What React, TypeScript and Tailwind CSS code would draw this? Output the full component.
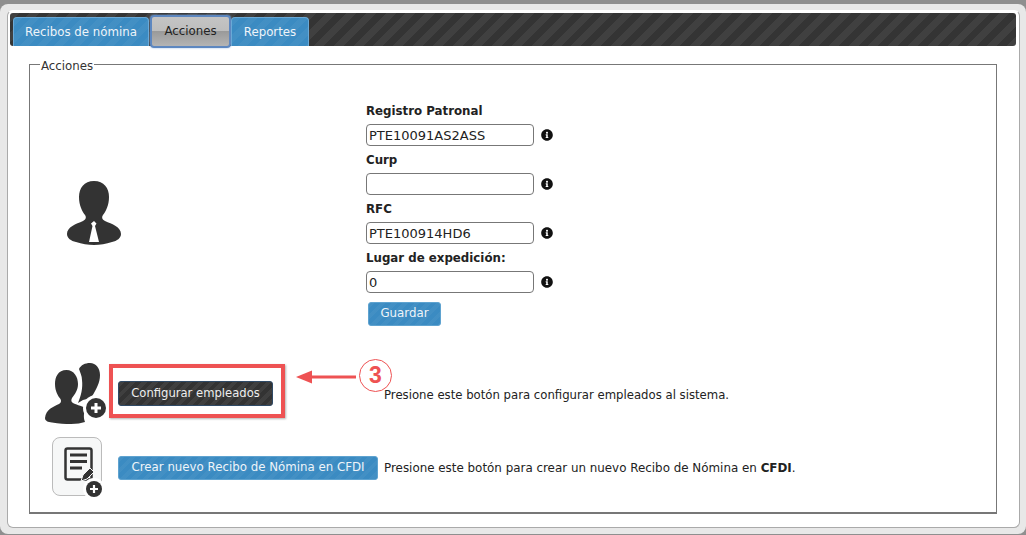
import React from "react";
import { FaInfoCircle } from "react-icons/fa";

const blueBtn =
  "bg-[#3b8bc2] bg-[repeating-linear-gradient(135deg,rgba(255,255,255,0.04)_0,rgba(255,255,255,0.04)_4px,transparent_4px,transparent_8px)] border border-[#5fa3d0] text-[#eef4f9] rounded-[3px]";

function Field({ label, value }: { label: string; value: string }) {
  return (
    <div className="flex flex-col">
      <label className="h-[27px] pt-[5px] leading-[18px] font-bold text-[#222] text-[11.8px]">{label}</label>
      <div className="flex items-center h-[22px]">
        <input
          readOnly
          value={value}
          className="w-[168px] h-[22px] border border-[#777] rounded-[4px] bg-white px-[2px] text-[13px] text-[#222] outline-none font-['DejaVu_Sans',sans-serif]"
        />
        <FaInfoCircle className="ml-[7px] text-[#111]" size={12} />
      </div>
    </div>
  );
}

function PersonTie() {
  return (
    <svg width="56" height="64" viewBox="0 0 56 64">
      <path
        d="M28 0C18 0 13 7 13 16C13 24 16 30 19 34C21 37 19 39 17 40C10 43 1 46 1 53C1 57 5 60 10 61C16 63 22 64 28 64C34 64 40 63 46 61C51 60 55 57 55 53C55 46 46 43 39 40C37 39 35 37 37 34C40 30 43 24 43 16C43 7 38 0 28 0Z"
        fill="#333"
      />
      <path d="M28 40l2.500 2.500-1.500 2.500L33 61H23L26.500 45l-1.500-2.500Z" fill="#fff" />
    </svg>
  );
}

function PeoplePlus() {
  return (
    <svg width="64" height="62" viewBox="0 0 64 62" className="overflow-visible">
      <path
        d="M34 7C36 3 40 1 45 1C51 1 55 6 55 13C55 21 51 27 49 31L46 36L38 38L33 41C36 34 38 26 37 18C37 14 35 10 34 7Z"
        fill="#333"
      />
      <path
        d="M21.500 8C13 8 10 15 10 22C10 29 13 34 15.500 37C16.500 39 16 41 14 42C8 45 1 47 0 56C0 59 3 60 7 60.500C14 61.500 20 62 26 62C32 62 36 61 40 60C38 55 39 49 41 46C36 44 30 42 28 41C26 40 26 38 27 36C30 32 33 28 33 22C33 15 29 8 21.500 8Z"
        fill="#333"
      />
      <circle cx="51" cy="46" r="13" fill="#fff" />
      <circle cx="51" cy="46" r="10" fill="#333" />
      <path d="M51 41v10M46 46h10" stroke="#fff" strokeWidth="3" />
    </svg>
  );
}

function DocPlus() {
  return (
    <div className="relative w-[50px] h-[59px] border border-[#bbb] rounded-[8px] bg-[#f6f7f7]">
      <svg className="absolute left-0 top-0" width="62" height="62" viewBox="0 0 62 62">
        <rect x="12.500" y="10.500" width="26" height="31" rx="2" fill="none" stroke="#333" strokeWidth="2.500" />
        <path d="M17 17h17M17 23.500h17M17 30h12" stroke="#333" strokeWidth="3" />
        <path d="M28 43l2-6 7-7 4 4-7 7Z" fill="#333" stroke="#f6f7f7" strokeWidth="1" />
        <circle cx="41" cy="51" r="11" fill="#fff" />
        <circle cx="41" cy="51" r="8" fill="#333" />
        <path d="M41 47v8M37 51h8" stroke="#fff" strokeWidth="2.200" />
      </svg>
    </div>
  );
}

export default function App() {
  const tab =
    "h-[29px] pt-[1px] flex items-center justify-center whitespace-nowrap text-[11.8px] rounded-t-[4px] border border-b-0 border-[#6aa9d6] text-[#eef4f9] bg-[#3b8bc2] bg-[repeating-linear-gradient(135deg,rgba(255,255,255,0.04)_0,rgba(255,255,255,0.04)_6px,transparent_6px,transparent_12px)]";
  return (
    <div className="w-[1026px] h-[535px] overflow-hidden bg-[#8f8f8f] pt-[4px] font-['DejaVu_Sans',sans-serif] text-[11.8px] text-[#222]">
      <div className="h-[530px] bg-[#e8e8e8] rounded-[8px] pl-[7px] pr-[6px] pt-[6px]">
        <div className="h-[518px] w-[1013px] relative bg-white rounded-[6px] border border-[#aaa] border-t-white pl-[2px] pt-[2px]">
          <div className="h-[33px] w-[1006px] bg-[#333] bg-[repeating-linear-gradient(135deg,#404040_0,#404040_7px,#343434_7px,#343434_14px)] rounded-[3px] flex items-end pl-[3px]">
            <div className={tab + " w-[136px]"}>Recibos de nómina</div>
            <div className="h-[33px] w-[81px] ml-[1px] -mb-[2px] pt-[1px] flex items-center justify-center text-[11.8px] text-[#222] rounded-[4px] border-2 border-[#5d87c0] shadow-[0_0_2px_#8fb4e0] bg-[linear-gradient(#c4c4c4_0,#bdbdbd_48%,#9a9a9a_50%,#b4b4b4_100%)]">
              Acciones
            </div>
            <div className={tab + " w-[78px]"}>Reportes</div>
          </div>
          <div className="pl-[19px] pt-[8px]">
            <fieldset className="w-[968px] h-[460px] border border-[#777] border-b-2 pl-[10px] pr-[10px]">
              <legend className="px-[1px] pt-[4px] leading-[17px] text-[#333]">Acciones</legend>
              <div className="flex">
                <div className="w-[90px] pt-[106px] pl-[26px] shrink-0 box-content">
                  <PersonTie />
                </div>
                <div className="ml-[210px] pt-[22px] flex flex-col">
                  <Field label="Registro Patronal" value="PTE10091AS2ASS" />
                  <Field label="Curp" value="" />
                  <Field label="RFC" value="PTE100914HD6" />
                  <Field label="Lugar de expedición:" value="0" />
                  <button className={blueBtn + " mt-[9px] ml-[2px] w-[73px] h-[24px]"}>Guardar</button>
                </div>
              </div>
              <div className="flex items-start mt-[35px] ml-[4px]">
                <div className="w-[74px] shrink-0 pl-[1px] pt-[1px]"><PeoplePlus /></div>
                <button className="mt-[20px] w-[155px] h-[25px] text-[11.6px] rounded-[3px] border border-[#2f4a66] text-[#eee] bg-[#333] bg-[repeating-linear-gradient(135deg,#3f3f3f_0,#3f3f3f_4px,#333_4px,#333_8px)]">
                  Configurar empleados
                </button>
                <span className="ml-[111px] mt-[27px] leading-[15px] text-[11.7px]">Presione este botón para configurar empleados al sistema.</span>
              </div>
              <div className="flex items-start mt-[13px] ml-[12px]">
                <div className="w-[66px] shrink-0"><DocPlus /></div>
                <button className={blueBtn + " mt-[19px] w-[260px] h-[24px]"}>
                  Crear nuevo Recibo de Nómina en CFDI
                </button>
                <span className="ml-[6px] mt-[24px] leading-[15px] text-[11.9px]">
                  Presione este botón para crear un nuevo Recibo de Nómina en <b>CFDI</b>.
                </span>
              </div>
            </fieldset>
          </div>
          {/* annotation */}
          <div className="absolute left-[101px] top-[353px] w-[176px] h-[54px] border-[4px] border-[#ee5253] shadow-[1px_1px_2px_rgba(0,0,0,0.3)]" />
          <svg className="absolute left-[288px] top-[358px]" width="60" height="16" viewBox="0 0 60 16">
            <path d="M14 8H60" stroke="#ee5253" strokeWidth="3" />
            <path d="M0 8l16-6.500v13Z" fill="#ee5253" />
          </svg>
          <div className="absolute left-[351px] top-[348px] w-[33px] h-[33px] rounded-full border border-[#ee5253] flex items-center justify-center text-[#ee5253] font-bold text-[23px] font-['Liberation_Sans',sans-serif]">
            3
          </div>
        </div>
      </div>
    </div>
  );
}
